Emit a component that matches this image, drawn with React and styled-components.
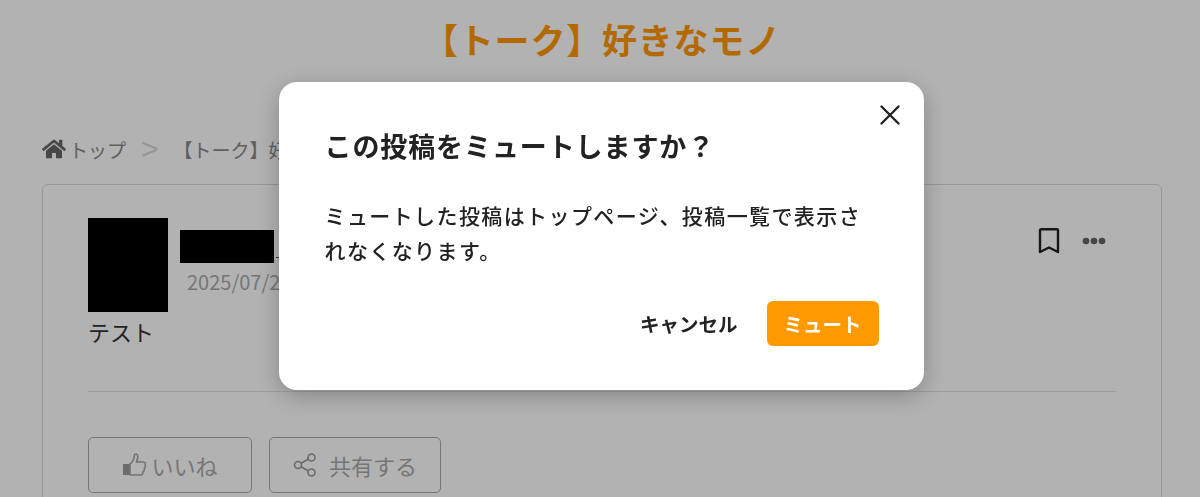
import React from "react";
import styled, { createGlobalStyle } from "styled-components";
import { FaHome } from "react-icons/fa";

const Global = createGlobalStyle`
  html, body { margin: 0; padding: 0; height: 100%; overflow: hidden; background: #fff; }
  body { font-family: "Noto Sans CJK JP", "Noto Sans", sans-serif; color: #222; }
  * { box-sizing: border-box; }
`;
const Page = styled.div`height: 497px; overflow: hidden; padding: 0 38px 0 42px;`;
const Title = styled.h1`margin: 0; height: 79px; padding-top: 14px; font-size: 35px; line-height: 50px; font-weight: 700; color: #ff9900; text-align: center; letter-spacing: 0.8px;`;
const Crumbs = styled.nav`display: flex; align-items: center; height: 28px; margin-top: 56px; font-size: 19px; color: #888; white-space: nowrap;`;
const CrumbLink = styled.span`margin-left: 3px;`;
const Sep = styled.span`margin: 0 15px 0 15px; font: 400 30px "Liberation Sans", sans-serif; color: #d8d8d8; line-height: 1;`;
const Card = styled.article`margin-top: 21px; height: 340px; padding: 33px 45px; border: 1px solid #d9d9d9; border-radius: 6px;`;
const Head = styled.div`display: flex; align-items: flex-start;`;
const Avatar = styled.div`width: 80px; height: 94px; background: #000; flex: none;`;
const Meta = styled.div`margin-left: 12px; padding-top: 12px;`;
const NameRow = styled.div`display: flex; align-items: flex-end; gap: 2px;`;
const NameBlock = styled.div`width: 94px; height: 33px; background: #000;`;
const NameTail = styled.div`width: 8px; height: 1px; margin-bottom: 5px; background: #555;`;
const DateText = styled.div`margin: 5px 0 0 7px; font-size: 20px; line-height: 28px; color: #aaa;`;
const Tools = styled.div`margin-left: auto; display: flex; align-items: center; gap: 22px; padding: 10px 10px 0 0;`;
const Body = styled.p`margin: 4px 0 0; font-size: 22px; line-height: 30px; color: #333;`;
const Rule = styled.hr`margin: 45px 0 0; border: 0; border-top: 1px solid #e3e3e3;`;
const Actions = styled.div`display: flex; gap: 17px; margin-top: 45px;`;
const Action = styled.button`display: flex; align-items: center; justify-content: center; gap: ${p => p.$gap}px; width: ${p => p.$w}px; height: 56px; padding: 0; background: transparent; border: 1px solid #aaa; border-radius: 5px; color: #aaa; font: 400 22px "Noto Sans CJK JP", sans-serif;`;
const Overlay = styled.div`position: fixed; inset: 0; background: rgba(0,0,0,.3); display: flex; justify-content: center; align-items: flex-start; padding: 82px 0 0 2px;`;
const Modal = styled.section`position: relative; width: 645px; height: 308px; padding: 41px 45px 0 46px; background: #fff; border-radius: 18px; box-shadow: 0 6px 24px rgba(0,0,0,.25);`;
const Close = styled.button`position: absolute; top: 21px; right: 22px; width: 24px; height: 24px; padding: 0; border: 0; background: none;`;
const ModalTitle = styled.h2`margin: 0; font-size: 27px; line-height: 46px; font-weight: 700; color: #222; letter-spacing: .9px;`;
const ModalText = styled.p`margin: 29px 0 0; font-size: 21px; line-height: 35px; color: #222; font-weight: 500; letter-spacing: 1.4px;`;
const ModalActions = styled.div`display: flex; justify-content: flex-end; align-items: center; gap: 29px; margin-top: 33px;`;
const Cancel = styled.button`padding: 0; border: 0; background: none; color: #222; font: 700 19.5px "Noto Sans CJK JP", sans-serif;`;
const Confirm = styled.button`width: 112px; height: 45px; padding: 0; border: 0; border-radius: 6px; background: #ff9900; color: #fff; font: 700 19.5px "Noto Sans CJK JP", sans-serif;`;

const Bookmark = () => <svg width="22" height="26" viewBox="0 0 22 26" fill="none" stroke="#222" strokeWidth="2.4" strokeLinejoin="round"><path d="M2 2.2a1 1 0 0 1 1-1h16a1 1 0 0 1 1 1V24l-9-4.500-9 4.500z"/></svg>;
const Dots = () => <svg width="24" height="8" viewBox="0 0 24 8" fill="#666"><circle cx="4" cy="4" r="3.300"/><circle cx="12" cy="4" r="3.300"/><circle cx="20" cy="4" r="3.300"/></svg>;
const Thumb = () => <svg width="25" height="24" viewBox="0 0 25 24"><rect x="1" y="11" width="7" height="11" fill="#9a9a9a"/><path d="M8 11c3-2 4-5 4.500-9 .2-1.500 3-1.300 3.300 1 .2 2-.5 4-1.300 6h7c2 0 2.500 2 1.500 3 .8 1.500.3 3-.8 3.500.4 1.500-.1 2.700-1.200 3.200.2 1.800-.8 3.300-2.500 3.300H8z" fill="none" stroke="#a5a5a5" strokeWidth="1.600" strokeLinejoin="round"/></svg>;
const Share = () => <svg width="24" height="24" viewBox="0 0 24 24" fill="none" stroke="#999" strokeWidth="1.600"><circle cx="5" cy="12" r="3.500"/><circle cx="18.500" cy="4.500" r="3.500"/><circle cx="18.500" cy="19.500" r="3.500"/><path d="M8 10.300 15.500 6M8 13.700 15.500 18"/></svg>;
const X = () => <svg width="24" height="24" viewBox="0 0 24 24" stroke="#222" strokeWidth="2.400" strokeLinecap="round"><path d="M3.500 3.500l17 17M20.500 3.500l-17 17"/></svg>;

export default function App() {
  return (
    <>
      <Global />
      <Page>
        <Title>【トーク】好きなモノ</Title>
        <Crumbs><FaHome size={24} color="#666" /><CrumbLink>トップ</CrumbLink><Sep>&gt;</Sep><span>【トーク】好きなモノ</span></Crumbs>
        <Card>
          <Head>
            <Avatar />
            <Meta><NameRow><NameBlock /><NameTail /></NameRow><DateText>2025/07/20</DateText></Meta>
            <Tools><Bookmark /><Dots /></Tools>
          </Head>
          <Body>テスト</Body>
          <Rule />
          <Actions>
            <Action $w={164} $gap={4}><Thumb />いいね</Action>
            <Action $w={172} $gap={12}><Share />共有する</Action>
          </Actions>
        </Card>
      </Page>
      <Overlay>
        <Modal>
          <Close aria-label="閉じる"><X /></Close>
          <ModalTitle>この投稿をミュートしますか？</ModalTitle>
          <ModalText>ミュートした投稿はトップページ、投稿一覧で表示されなくなります。</ModalText>
          <ModalActions><Cancel>キャンセル</Cancel><Confirm>ミュート</Confirm></ModalActions>
        </Modal>
      </Overlay>
    </>
  );
}
